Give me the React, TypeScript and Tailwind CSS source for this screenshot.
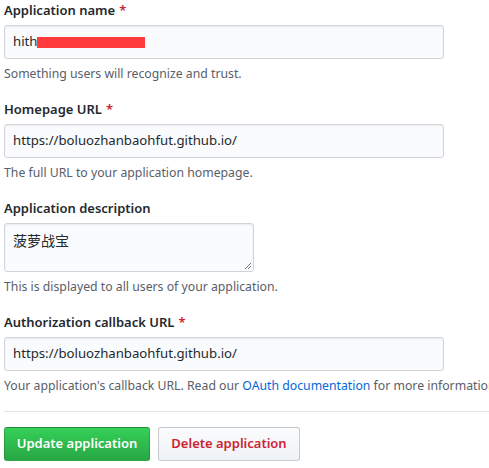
import React from "react";

const font = { fontFamily: '"Noto Sans", "Noto Sans CJK SC", sans-serif' };

function Label({ text, required }: { text: string; required?: boolean }) {
	return (
		<div className="mb-1 h-[21px] text-[13px] leading-[21px] font-semibold text-[#24292e]">
			{text}
			{required && <span className="ml-1 text-[#cb2431]">*</span>}
		</div>
	);
}

function Help({ children }: { children: React.ReactNode }) {
	return (
		<p className="mt-1.5 mb-4 h-[18px] text-[12.25px] leading-[18px] whitespace-nowrap text-[#586069]">
			{children}
		</p>
	);
}

function Field({ children }: { children: React.ReactNode }) {
	return (
		<div className="flex h-[34px] w-[440px] items-center rounded-[3px] border border-[#d1d5da] bg-[#fafbfc] px-2 text-[13.2px] text-[#24292e] shadow-[inset_0_1px_2px_rgba(27,31,35,0.075)]">
			{children}
		</div>
	);
}

export default function App() {
	return (
		<div className="h-[468px] w-[489px] overflow-hidden bg-white pl-1" style={font}>
			<Label text="Application name" required />
			<Field>
				<span>hith</span>
				<span className="inline-block h-[11px] w-[108px] bg-[#ff3b3b]" />
			</Field>
			<Help>Something users will recognize and trust.</Help>

			<Label text="Homepage URL" required />
			<Field>https://boluozhanbaohfut.github.io/</Field>
			<Help>The full URL to your application homepage.</Help>

			<Label text="Application description" />
			<div className="relative h-[49px] w-[250px] rounded-[3px] border border-[#d1d5da] bg-[#fafbfc] px-2 pt-[7px] text-[14px] leading-[20px] text-[#24292e] shadow-[inset_0_1px_2px_rgba(27,31,35,0.075)]">
				菠萝战宝
				<svg className="absolute right-[1px] bottom-[1px]" width="8" height="8" viewBox="0 0 8 8">
					<path d="M7 1 L1 7 M7 4 L4 7" stroke="#6a737d" strokeWidth="1" />
				</svg>
			</div>
			<Help>This is displayed to all users of your application.</Help>

			<Label text="Authorization callback URL" required />
			<Field>https://boluozhanbaohfut.github.io/</Field>
			<Help>
				Your application's callback URL. Read our{" "}
				<span className="text-[#0366d6]">OAuth documentation</span> for more information.
			</Help>

			<div className="mt-[15px] border-t border-[#e1e4e8]" />

			<div className="mt-[15px] flex gap-2">
				<button className="h-[34px] w-[146px] rounded-[3px] border border-[rgba(27,31,35,0.2)] bg-gradient-to-b from-[#34d058] to-[#28a745] text-[13px] font-semibold text-white">
					Update application
				</button>
				<button className="h-[34px] w-[142px] rounded-[3px] border border-[rgba(27,31,35,0.2)] bg-gradient-to-b from-[#fafbfc] to-[#eff3f6] text-[13px] font-semibold text-[#cb2431]">
					Delete application
				</button>
			</div>
		</div>
	);
}
